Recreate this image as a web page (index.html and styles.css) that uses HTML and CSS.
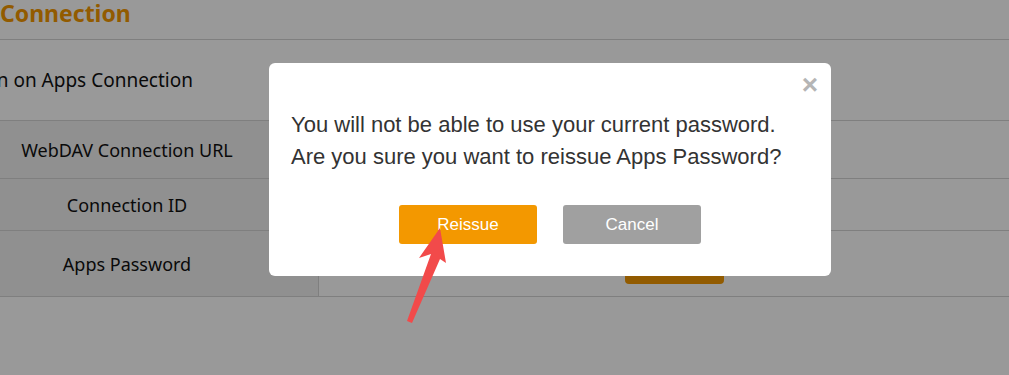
FILE: index.html
```html
<!DOCTYPE html>
<html lang="en">
<head>
  <meta charset="UTF-8" />
  <meta name="viewport" content="width=device-width, initial-scale=1.0"/>
  <title>Apps Connection</title>
  <link rel="stylesheet" href="styles.css">
</head>
<body>
  <div class="page">
    <h2 class="page-title">Connection</h2>
    <h3 class="section-title">Information on Apps Connection</h3>

    <div class="info-table">
      <div class="info-row">
        <div class="info-label">WebDAV Connection URL</div>
        <div class="info-value"></div>
      </div>
      <div class="info-row short">
        <div class="info-label">Connection ID</div>
        <div class="info-value"></div>
      </div>
      <div class="info-row tall">
        <div class="info-label">Apps Password</div>
        <div class="info-value">
          <button class="btn-reissue-page">Reissue</button>
        </div>
      </div>
    </div>
  </div>

  <div class="overlay"></div>

  <div class="modal" role="dialog">
    <span class="modal-close">&times;</span>
    <p class="modal-text">
      You will not be able to use your current password.<br>
      Are you sure you want to reissue Apps Password?
    </p>
    <div class="modal-buttons">
      <button class="btn btn-primary">Reissue</button>
      <button class="btn btn-cancel">Cancel</button>
    </div>
  </div>

  <svg class="pointer" width="1009" height="375" viewBox="0 0 1009 375">
    <polygon points="440,228 446,263 440,259 412,323 407,321 431,254 419,258" fill="#f24a4a"/>
  </svg>
</body>
</html>
```

FILE: styles.css
```css
/* Base */
* {
  margin: 0;
  padding: 0;
  box-sizing: border-box;
}

body {
  font-family: 'Noto Sans', 'Liberation Sans', sans-serif;
  background: #fff;
  color: #1a1a1a;
  overflow: hidden;
  width: 1009px;
  height: 375px;
}

/* Page behind the dialog */
.page {
  width: 1009px;
}

.page-title {
  height: 40px;
  font-size: 23px;
  font-weight: 700;
  color: #f39800;
  line-height: 26px;
  border-bottom: 1px solid #d4d4d4;
}

.section-title {
  height: 81px;
  display: flex;
  align-items: center;
  font-size: 19px;
  font-weight: 400;
  color: #111;
  margin-left: -99px;
  border-bottom: 1px solid #d4d4d4;
}

.info-row {
  display: flex;
  height: 58px;
  border-bottom: 1px solid #d4d4d4;
}

.info-row.short {
  height: 52px;
}

.info-row.tall {
  height: 66px;
}

.info-label {
  width: 383px;
  margin-left: -64px;
  background: #f0f0f0;
  border-right: 1px solid #d4d4d4;
  display: flex;
  align-items: center;
  justify-content: center;
  font-size: 18px;
  color: #111;
}

.info-value {
  flex: 1;
  display: flex;
  align-items: center;
  padding-left: 306px;
}

.btn-reissue-page {
  width: 99px;
  height: 40px;
  border: none;
  border-radius: 4px;
  background: #f39800;
}

/* Dialog */
.overlay {
  position: fixed;
  inset: 0;
  background: rgba(0, 0, 0, 0.4);
}

.modal {
  position: absolute;
  left: 269px;
  top: 63px;
  width: 562px;
  height: 213px;
  background: #fff;
  border-radius: 6px;
  padding: 46px 22px 0;
  font-family: 'Liberation Sans', Arial, sans-serif;
}

.modal-close {
  position: absolute;
  right: 13px;
  top: 8px;
  font-size: 28px;
  line-height: 28px;
  color: #b5b5b5;
  font-weight: 700;
}

.modal-text {
  font-size: 22px;
  line-height: 32px;
  color: #333;
}

.modal-buttons {
  display: flex;
  justify-content: center;
  gap: 26px;
  margin-top: 32px;
}

.btn {
  width: 138px;
  height: 39px;
  border: none;
  border-radius: 3px;
  color: #fff;
  font-family: 'Liberation Sans', Arial, sans-serif;
  font-size: 17px;
}

.btn-primary {
  background: #f39800;
}

.btn-cancel {
  background: #a0a0a0;
}

.pointer {
  position: absolute;
  left: 0;
  top: 0;
}
```
